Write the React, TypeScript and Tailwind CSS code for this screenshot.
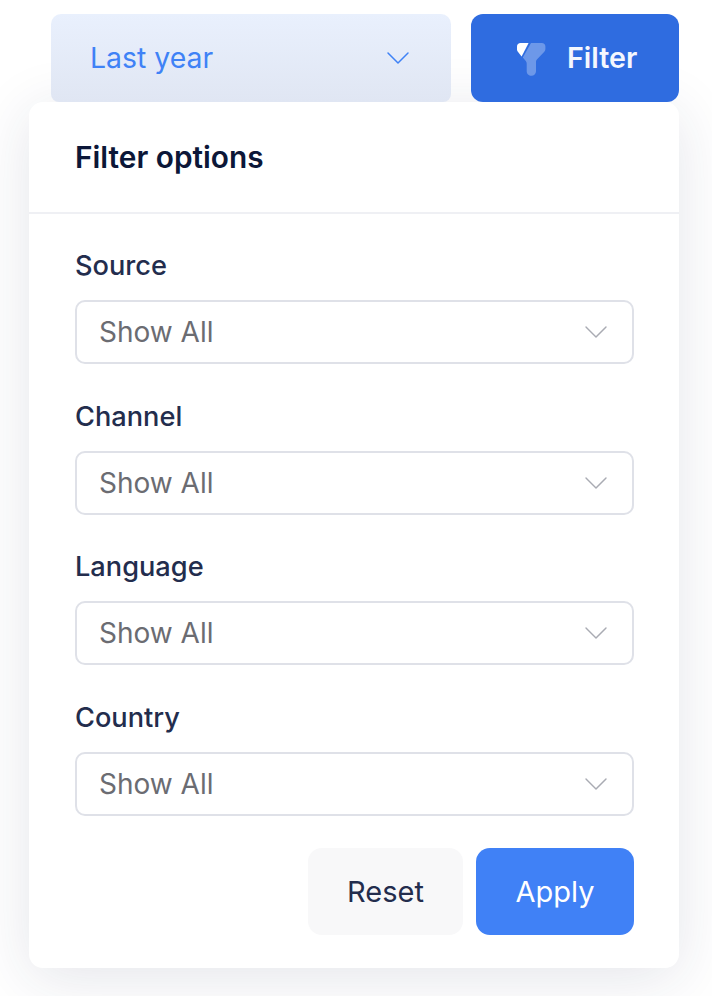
import { ChevronDown } from 'lucide-react'

const fields = ['Source', 'Channel', 'Language', 'Country']

const FunnelIcon = () => (
  <svg width="29" height="33" viewBox="0 0 29 33" fill="none" className="mt-[3px]">
    <path
      d="M3.5 0H11.6L4.6 13.4L0.9 8.8C0.3 8 0 7.2 0 6.2V3.5C0 1.5 1.5 0 3.5 0Z"
      fill="#ffffff"
    />
    <path
      d="M14 0H24.8C26.9 0 28.4 1.5 28.4 3.5V6C28.4 7.1 28 8 27.3 8.8L19.9 16.6C19.3 17.3 19 18 19 18.9V28.2C19 30.9 17 32.8 14.4 32.8C11.8 32.8 9.7 30.9 9.7 28.2V20.6C9.7 19.6 9.4 18.8 8.8 18L5.8 14.6L14 0Z"
      fill="#ffffff"
      fillOpacity="0.3"
    />
  </svg>
)

const Field = ({ label }: { label: string }) => (
  <div className="flex flex-col gap-[18px]">
    <p className="text-[27.2px] leading-[32px] font-medium text-[#232d4d]">
      {label}
    </p>
    <div className="flex h-16 items-center justify-between rounded-[10px] border-2 border-[#dfe1e8] pl-[22px] pr-4">
      <span className="text-[28px] leading-8 text-[#6b6c72]">Show All</span>
      <ChevronDown size={40} strokeWidth={0.85} className="text-[#a9abb3]" />
    </div>
  </div>
)

export default function App() {
  return (
    <div className="h-[996px] w-[712px] overflow-hidden bg-white font-['Inter',sans-serif]">
      <div className="flex h-[102px] items-end gap-5 pl-[51px] pr-[33px]">
        <div className="flex h-[88px] w-[400px] items-center justify-between rounded-t-[10px] rounded-b-[8px] bg-gradient-to-b from-[#e9f0fd] to-[#e0e6f3] pl-[39px] pr-[33px]">
          <span className="text-[28.4px] leading-8 text-[#3f82f6]">Last year</span>
          <ChevronDown size={40} strokeWidth={0.9} className="text-[#3f82f6]" />
        </div>
        <div className="flex h-[88px] w-[208px] items-center gap-[21px] rounded-[12px] bg-[#2f6ce0] pl-[46px]">
          <FunnelIcon />
          <span className="text-[28.6px] leading-8 font-semibold text-[#f4f7fe]">Filter</span>
        </div>
      </div>
      <div className="ml-[29px] h-[866px] w-[650px] rounded-[14px] bg-white shadow-[0_10px_60px_rgba(30,40,80,0.12)]">
        <div className="flex h-[112px] items-center border-b-2 border-[#eff0f4] pl-[46px]">
          <h2 className="text-[29.8px] leading-8 font-semibold text-[#0c1738]">Filter options</h2>
        </div>
        <div className="flex flex-col gap-[36.67px] pl-[46px] pr-[45px] pt-9">
          {fields.map(f => (
            <Field key={f} label={f} />
          ))}
        </div>
        <div className="mt-8 flex justify-end gap-[13px] pr-[45px]">
          <button className="h-[87px] w-[155px] rounded-[14px] bg-[#f8f8f9] text-[29px] text-[#232d4d]">
            Reset
          </button>
          <button className="h-[87px] w-[158px] rounded-[14px] bg-[#4081f6] text-[29px] text-white">
            Apply
          </button>
        </div>
      </div>
    </div>
  )
}
